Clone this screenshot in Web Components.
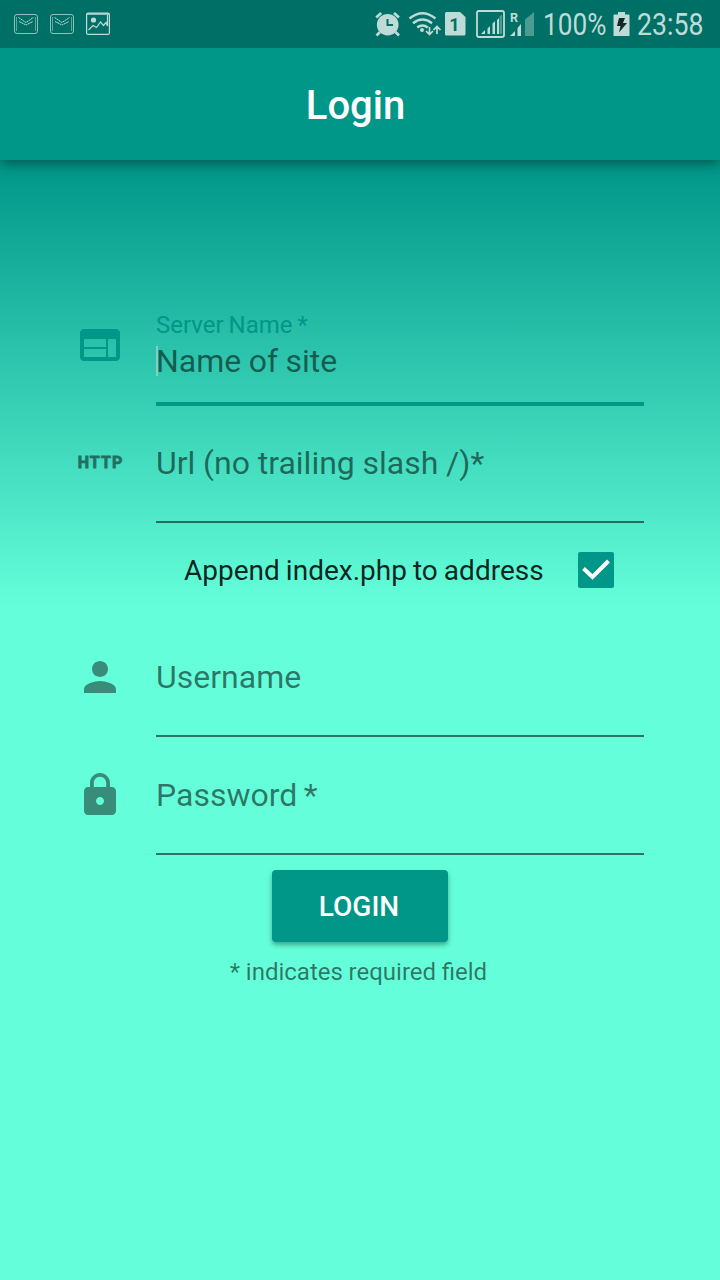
<!DOCTYPE html>
<html lang="en">
<head>
<meta charset="utf-8">
<title>Login</title>
<style>
html,body{margin:0;height:100%}
body{font-family:Roboto,sans-serif;overflow:hidden;background:#64ffda}
</style>
</head>
<body>
<login-screen></login-screen>
<script>
const define=(name,html,setup)=>customElements.define(name,class extends HTMLElement{
  connectedCallback(){
    if(this.shadowRoot)return;
    const t=document.createElement('template');
    t.innerHTML=html;
    const r=this.attachShadow({mode:'open'});
    r.append(t.content.cloneNode(true));
    if(setup)setup(this,r);
  }
});

define('status-bar',`<style>
:host{display:flex;height:48px;background:#007066;color:#bfdbd8;align-items:center;justify-content:space-between;box-sizing:border-box;padding:0 16px 0 12px;position:relative;z-index:2}
svg{display:block;flex:none}
.t{font-size:31px;line-height:48px;height:48px;white-space:nowrap;transform-origin:0 50%;transform:scaleX(.86);padding-top:1px;box-sizing:border-box}
.g{display:flex;align-items:center}
.p{width:67px;margin-left:7px}.c{width:67px;margin-left:7px}
.r text{font-family:Roboto,sans-serif;font-weight:700}
</style>
<svg width="100" height="48" viewBox="0 0 100 48" fill="none" stroke="#bfdbd8">
<g id="m" stroke-width="1"><rect x="2.5" y="14.500" width="23" height="19" rx="2.500" stroke-opacity=".75"/><path d="M4.500 17V31M23.500 17V31" stroke-opacity=".5"/><path d="M6.500 17.500l7.500 5 7.500-5M7 21.500l7 3.500 7-3.500" stroke-dasharray="2 .5"/></g>
<use href="#m" x="36"/>
<rect x="74.600" y="13.100" width="22.800" height="21.300" rx="1.500" stroke-width="1.200"/><path d="M75 14H97" stroke-width="1.500"/><circle cx="81.500" cy="20" r="2.600" fill="#bfdbd8" stroke="none"/><path d="M76.500 30l4.500-4.500 3.500 2 4-5.500 3 3.500 2.500-3 1.500 3.500V15" stroke-width="1.200"/>
</svg>
<div class="g"><svg class="r" width="163" height="48" viewBox="373 0 163 48" fill="#bfdbd8">
<circle cx="387.700" cy="24.700" r="10.800"/><path d="M380 32l-3.500 3.500M395.500 32l3.500 3.500M376.200 17.500l5-4.500M399 17.500l-5-4.500" stroke="#bfdbd8" stroke-width="2.700"/><path d="M387.500 19v6h5.500" fill="none" stroke="#007066" stroke-width="2"/>
<g fill="none" stroke="#bfdbd8" stroke-width="2.500"><path d="M409.500 18.500Q422.500 8 435.500 18.500M413 23.200Q422.500 15.800 432 23.200M417.200 27.600Q422.500 23.500 427.800 27.600"/></g><circle cx="422" cy="30" r="2"/>
<path d="M429.500 27V34M426 31l3.500 3.500 3.500-3.500M437 34V26.500M433.500 30l3.500-3.500 3.500 3.500" fill="none" stroke="#bfdbd8" stroke-width="1.700"/>
<path d="M446.500 12H460l5.500 5V34q0 1.500-1.500 1.500H446.500q-1.500 0-1.500-1.500V13.500q0-1.500 1.500-1.500z"/><text x="454.500" y="31" font-size="18" text-anchor="middle" style="fill:#007066">1</text>
<rect x="477" y="11" width="27" height="26" rx="2" fill="none" stroke="#bfdbd8" stroke-width="1.800"/>
<path d="M481 34l4-4v4zM487.500 34v-5.500l2.500-2.500V34zM492.500 34V23.500l2.500-2.500V34z"/><path d="M497 34v-14l2-2V34z"/><path d="M499.500 34V16.500l2.500-2V34z" opacity=".4"/>
<text x="510" y="21.800" font-size="12.500">R</text><path d="M510 36l5-5v5zM517.500 36v-8l3.500-4v12z"/><path d="M525 36V19.500L534 12v24z" opacity=".4"/>
</svg>
<div class="p"><div class="t" style="transform:scaleX(.845)">100%</div></div>
<svg width="17" height="26" viewBox="0 0 17 26" style="margin-left:3px"><path d="M1.500 3.500H5V1h7v2.500h3.500q1 0 1 1V25h-16V4.500q0-1 1-1z" fill="#bfdbd8"/><path d="M6 7h6l-2 5h4L6 21.500 7.500 15H4z" fill="#172928"/></svg>
<div class="c"><div class="t">23:58</div></div></div>`);

define('app-bar',`<style>
:host{display:flex;height:112px;background:#009688;color:#fff;align-items:center;justify-content:center;font-size:40px;font-weight:500;box-shadow:0 2px 14px rgba(0,0,0,.5);position:relative;z-index:1;box-sizing:border-box;padding:2px 9px 0 0}
</style><slot></slot>`);

const icons={
web:'<path d="M20 4H4c-1.100 0-1.990.9-1.990 2L2 18c0 1.100.9 2 2 2h16c1.100 0 2-.9 2-2V6c0-1.100-.9-2-2-2zm-5 14H4v-4h11v4zm0-5H4V9h11v4zm5 5h-4V9h4v9z"/>',
person:'<path d="M12 12c2.210 0 4-1.790 4-4s-1.790-4-4-4-4 1.790-4 4 1.790 4 4 4zm0 2c-2.670 0-8 1.340-8 4v2h16v-2c0-2.660-5.330-4-8-4z"/>',
lock:'<path d="M18 8h-1V6c0-2.760-2.240-5-5-5S7 3.240 7 6v2H6c-1.100 0-2 .9-2 2v10c0 1.100.9 2 2 2h12c1.100 0 2-.9 2-2V10c0-1.100-.9-2-2-2zm-6 9c-1.100 0-2-.9-2-2s.9-2 2-2 2 .9 2 2-.9 2-2 2zm3.100-9H8.900V6c0-1.710 1.390-3.100 3.100-3.100 1.710 0 3.100 1.390 3.100 3.100v2z"/>'};

define('text-field',`<style>
:host{display:grid;grid-template-columns:48px 488px;column-gap:32px;padding-left:76px;height:var(--h,118px);box-sizing:border-box;color:rgba(0,0,0,.54)}
.icon{height:48px;margin-top:var(--it,30px);display:flex;align-items:center;justify-content:center;opacity:.82}
.icon svg{width:48px;height:48px;display:block;fill:currentColor}
.http{font-weight:700;font-size:16px;line-height:20px;letter-spacing:1.100px;margin-right:-1px;color:#000;-webkit-text-stroke:.8px #000;opacity:.6}
.box{border-bottom:2px solid rgba(0,0,0,.54);display:flex;flex-direction:column;justify-content:flex-end;box-sizing:border-box;padding-bottom:39px}
.small{display:none;font-size:24px;line-height:28px;color:#009688;word-spacing:-1px;margin-bottom:2px}
.value{font-size:32px;line-height:38px;white-space:nowrap;word-spacing:var(--ws,0)}
:host([active]) .small{display:block}
:host([active]) .box{border-bottom:4px solid #009688;padding-bottom:21px}
:host([active]) .icon{color:#009688;opacity:1}
:host([active]) .value{display:flex;align-items:center;line-height:40px;height:40px}
:host([active]) .value::before{content:"";width:2px;height:30px;background:#84cfc4;margin-right:-2px;flex:none}
</style><div class="icon"></div><div class="box"><span class="small"></span><div class="value"><slot></slot></div></div>`,(el,r)=>{
  const i=el.getAttribute('icon');
  r.querySelector('.icon').innerHTML=icons[i]?`<svg viewBox="0 0 24 24">${icons[i]}</svg>`:'<span class="http">HTTP</span>';
  r.querySelector('.small').textContent=el.getAttribute('label')||'';
});

define('check-row',`<style>
:host{display:flex;height:94px;box-sizing:border-box;align-items:center;justify-content:space-between;padding:0 106px 0 184px;font-size:28px;color:rgba(0,0,0,.87);word-spacing:-.9px}
svg{display:block}
</style><span><slot></slot></span><svg width="36" height="36"><rect width="36" height="36" rx="2" fill="#009688"/><path d="M5.500 16.500l9 8.500 16-16" fill="none" stroke="#fff" stroke-width="4"/></svg>`);

define('raised-button',`<style>
:host{display:flex;width:176px;height:72px;border-radius:4px;background:#009688;color:#fff;align-items:center;justify-content:center;font-size:28px;font-weight:500;box-shadow:0 3px 5px rgba(0,0,0,.35);box-sizing:border-box;padding:1px 2px 0 0}
</style><slot></slot>`);

define('login-screen',`<style>
:host{display:flex;flex-direction:column;width:720px;height:1280px}
main{flex:1;background:linear-gradient(#009688,#64ffda 40%);display:flex;flex-direction:column;padding-top:139px}
check-row{margin-bottom:2px}
raised-button{align-self:center;margin-top:15px}
.note{font-size:24px;line-height:28px;color:rgba(0,0,0,.54);margin:16px 3px 0 0;align-self:center;word-spacing:-.3px}
</style>
<status-bar></status-bar><app-bar>Login</app-bar>
<main>
<text-field active icon="web" label="Server Name *" style="--h:107px;--it:22px;--ws:-.5px">Name of site</text-field>
<text-field icon="http" style="--h:117px;--it:33px;--ws:-.2px">Url (no trailing slash /)*</text-field>
<check-row>Append index.php to address</check-row>
<text-field icon="person" style="--it:34px">Username</text-field>
<text-field icon="lock" style="--it:34px;--ws:-1.500px">Password *</text-field>
<raised-button>LOGIN</raised-button>
<div class="note">* indicates required field</div>
</main>`);
</script>
</body>
</html>
